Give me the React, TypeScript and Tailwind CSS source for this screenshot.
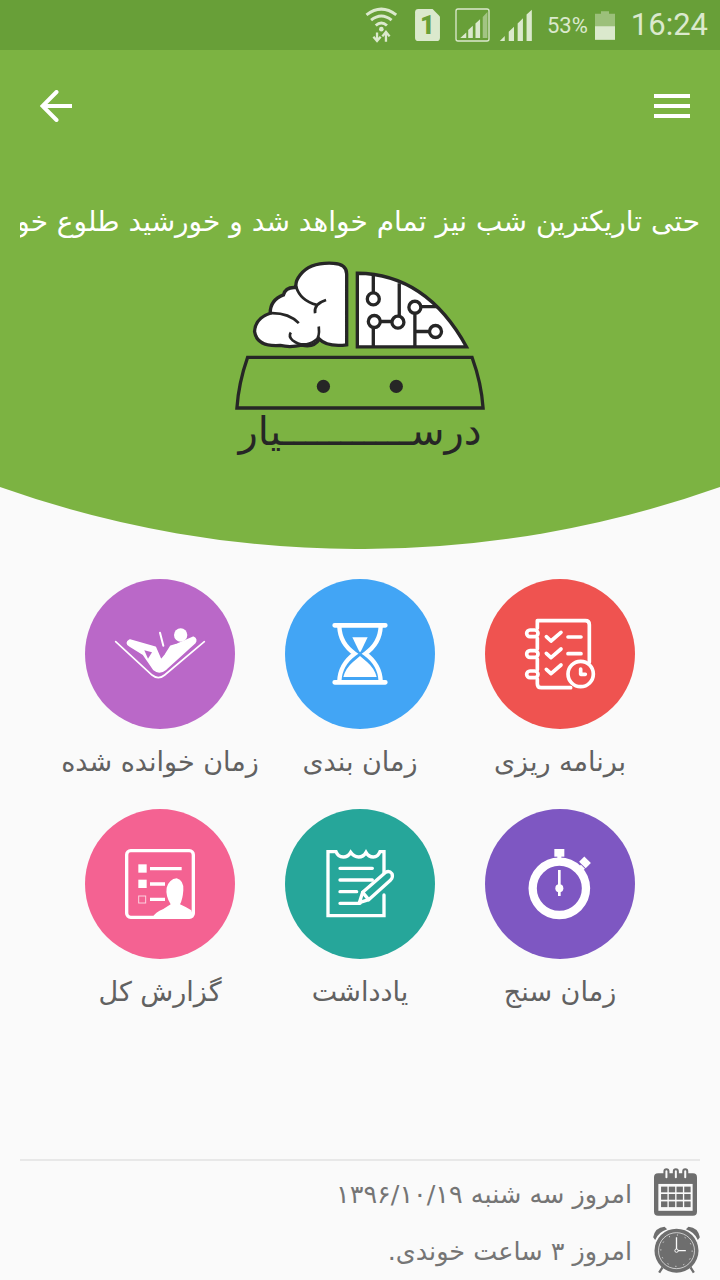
import React from 'react';

const fa = "font-['DejaVu_Sans',sans-serif]";

const WifiIcon = () => (
  <svg viewBox="75 20 105 115" className="w-[35px] h-[38px]" fill="none" stroke="#dbe9cd" strokeWidth="9">
    <path d="M82 47Q127 12 172 47" />
    <path d="M96 63Q127 38 158 63" />
    <path d="M110 79Q127 64 144 79" />
    <circle cx="127" cy="90" r="7" fill="#dbe9cd" stroke="none" />
    <path d="M114 100V125M103 113L114 126L125 113" strokeWidth="7" />
    <path d="M141 128V100M130 112L141 98L152 112" strokeWidth="7" />
  </svg>
);

const SimIcon = () => (
  <svg viewBox="228 30 74 95" className="w-[25px] h-[32px]">
    <path d="M238 30H280L302 52V115Q302 125 292 125H238Q228 125 228 115V40Q228 30 238 30Z" fill="#dbe9cd" />
    <text x="265" y="103" textAnchor="middle" fontFamily="Roboto, sans-serif" fontWeight="900" fontSize="76" fill="#689f38">1</text>
  </svg>
);

const LteIcon = () => (
  <svg viewBox="346 26 106 103" className="w-[35px] h-[34px]">
    <rect x="349" y="29" width="100" height="97" rx="6" fill="none" stroke="#dbe9cd" strokeWidth="4" />
    <path d="M362 117L380 100V117Z" fill="#dbe9cd" />
    <path d="M386 117V93L400 80V117Z" fill="#dbe9cd" />
    <path d="M408 117V73L422 60V117Z" fill="#dbe9cd" />
    <path d="M430 117V53L444 38V117Z" fill="#dbe9cd" opacity="0.5" />
  </svg>
);

const SignalIcon = () => (
  <svg viewBox="478 28 102 100" className="w-[34px] h-[33px]" fill="#dbe9cd">
    <path d="M480 125L495 110V125Z" />
    <path d="M507 125V97L523 82V125Z" />
    <path d="M534 125V72L550 56V125Z" />
    <path d="M561 125V45L577 30V125Z" />
  </svg>
);

const BatteryIcon = () => (
  <svg viewBox="765 30 60 86" className="w-[20px] h-[29px]" fill="#dbe9cd">
    <path d="M783 30H807V38H825V75H765V38H783Z" opacity="0.45" />
    <rect x="765" y="75" width="60" height="41" />
  </svg>
);

const PlannerIcon = () => (
  <svg viewBox="15 12 450 450" className="w-[150px] h-[150px]" fill="none" stroke="#fff" strokeWidth="11" strokeLinecap="round" strokeLinejoin="round">
    <path d="M172 160V137H316Q328 137 328 149V262M172 190V222M172 252V284M172 312V326Q172 338 184 338H272" />
    <rect x="140" y="165" width="34" height="20" rx="10" />
    <rect x="140" y="227" width="34" height="20" rx="10" />
    <rect x="140" y="288" width="34" height="20" rx="10" />
    <path d="M199 185L213 198L243 172M199 235L213 248L243 222M199 283L213 296L243 270" />
    <path d="M264 186H303M264 236H303" />
    <circle cx="302" cy="297" r="38" />
    <path d="M302 282V298H316" />
  </svg>
);

const HourglassIcon = () => (
  <svg viewBox="15 12 450 450" className="w-[150px] h-[150px]" fill="none" stroke="#fff" strokeLinecap="round">
    <path d="M164 151H316M164 322H316" strokeWidth="14" />
    <path d="M178 155Q180 205 224 236Q180 268 178 318M302 155Q300 205 256 236Q300 268 302 318" strokeWidth="13" />
    <path d="M217 187H263L242 230H238Z" fill="#fff" stroke="none" />
    <path d="M240 243L262 262Q283 280 290 306H190Q197 280 218 262Z" fill="#fff" stroke="none" />
  </svg>
);

const ReadingIcon = () => (
  <svg viewBox="15 12 450 450" className="w-[150px] h-[150px]" fill="none" stroke="#fff">
    <path d="M107 200L216 300Q235 316 254 300L373 200" strokeWidth="5" strokeLinecap="round" />
    <circle cx="302" cy="180" r="20" fill="#fff" stroke="none" />
    <path d="M150 195L226 217L243 256L256 240L272 214L292 208L340 187Q352 192 344 204L258 282Q238 298 222 284L190 238L150 213Q134 204 150 195Z" fill="#fff" stroke="#fff" strokeWidth="5" strokeLinejoin="round" />
    <path d="M193 226L216 232L204 251Z" fill="#ba68c8" stroke="none" />
    <path d="M240 173L250 212" strokeWidth="6" strokeLinecap="round" />
  </svg>
);

const StopwatchIcon = () => (
  <svg viewBox="15 12 450 450" className="w-[150px] h-[150px]" fill="#fff">
    <rect x="223" y="132" width="30" height="23" />
    <rect x="232" y="150" width="12" height="20" />
    <rect x="301" y="161" width="28" height="22" transform="rotate(45 315 172)" />
    <path d="M300 182L312 194" stroke="#fff" strokeWidth="8" />
    <circle cx="238" cy="250" r="80" fill="none" stroke="#fff" strokeWidth="25" />
    <rect x="234" y="195" width="8" height="78" />
    <circle cx="238" cy="250" r="12" />
  </svg>
);

const NoteIcon = () => (
  <svg viewBox="15 12 450 450" className="w-[150px] h-[150px]" fill="none" stroke="#fff" strokeWidth="10" strokeLinecap="round">
    <path d="M312 215V140H300Q294 156 280 156Q266 156 258 142Q250 156 236 156Q222 156 212 142Q204 156 190 156Q174 156 168 140H144V332H312V270" strokeLinejoin="miter" />
    <path d="M180 190H277M180 225H277M180 260H230M180 295H240" />
    <path d="M238 293L248 262L317 202Q328 196 336 206Q340 216 332 225L266 284Z" fill="#26a69a" strokeLinejoin="round" />
    <path d="M248 262L266 284" />
  </svg>
);

const ReportIcon = () => (
  <svg viewBox="15 12 450 450" className="w-[150px] h-[150px]" fill="none" stroke="#fff">
    <rect x="140" y="137" width="200" height="200" rx="12" strokeWidth="10" />
    <rect x="175" y="178" width="25" height="25" fill="#fff" stroke="none" />
    <rect x="175" y="224" width="25" height="25" fill="#fff" stroke="none" />
    <rect x="176" y="273" width="21" height="21" strokeWidth="3" opacity="0.7" />
    <path d="M210 191H305M210 237H255M210 283H255" strokeWidth="10" />
    <path d="M218 337Q225 322 250 312L272 298Q256 272 260 248Q268 222 290 220Q312 226 310 256Q308 284 300 298Q318 306 334 316L340 337Z" fill="#fff" stroke="none" />
  </svg>
);

const CalendarIcon = () => (
  <svg viewBox="1005 55 128 142" className="w-[43px] h-[48px] mr-[3px] mb-[4px]">
    <rect x="1005" y="70" width="128" height="127" rx="12" fill="#6e6e6e" />
    <rect x="1018" y="102" width="102" height="80" fill="#fafafa" />
    <g fill="none" stroke="#6e6e6e" strokeWidth="6">
      <rect x="1036" y="58" width="12" height="30" rx="6" fill="#fafafa" />
      <rect x="1064" y="58" width="12" height="30" rx="6" fill="#fafafa" />
      <rect x="1092" y="58" width="12" height="30" rx="6" fill="#fafafa" />
    </g>
    <g fill="#6e6e6e">
      <rect x="1026" y="110" width="19" height="17" />
      <rect x="1049" y="110" width="19" height="17" />
      <rect x="1072" y="110" width="19" height="17" />
      <rect x="1095" y="110" width="19" height="17" />
      <rect x="1026" y="132" width="19" height="17" />
      <rect x="1049" y="132" width="19" height="17" />
      <rect x="1072" y="132" width="19" height="17" />
      <rect x="1095" y="132" width="19" height="17" />
      <rect x="1026" y="154" width="19" height="17" />
      <rect x="1049" y="154" width="19" height="17" />
      <rect x="1072" y="154" width="19" height="17" />
      <rect x="1095" y="154" width="19" height="17" />
    </g>
  </svg>
);

const AlarmIcon = () => (
  <svg viewBox="1000 228 140 144" className="w-[47px] h-[48px] mb-[4px]">
    <path d="M1000 262Q1005 232 1034 230L1042 238Q1016 246 1006 270Z" fill="#6e6e6e" />
    <path d="M1140 262Q1135 232 1106 230L1098 238Q1124 246 1134 270Z" fill="#6e6e6e" />
    <path d="M1028 352L1018 368M1112 352L1122 368" stroke="#6e6e6e" strokeWidth="7" />
    <circle cx="1070" cy="302" r="66" fill="#6e6e6e" />
    <circle cx="1070" cy="302" r="54" fill="none" stroke="#fafafa" strokeWidth="2" />
    <circle cx="1070" cy="302" r="47" fill="none" stroke="#fafafa" strokeWidth="3" strokeDasharray="3 21.6" />
    <path d="M1070 302V262M1070 302H1098" stroke="#fafafa" strokeWidth="4" />
    <circle cx="1070" cy="302" r="5" fill="#6e6e6e" stroke="#fafafa" strokeWidth="3" />
  </svg>
);

const LogoDrawing = () => (
  <svg viewBox="0 0 840 490" className="w-[280px] h-[163px]" fill="none" stroke="#262626" strokeWidth="10">
    <path d="M380 72Q380 42 340 40Q270 36 240 75Q224 95 228 113Q196 110 190 135Q150 150 150 190Q105 205 103 245Q110 292 180 287Q210 294 245 286Q282 294 298 268Q320 292 380 285Z" fill="#fff" />
    <path d="M228 110Q240 152 290 165M318 150Q280 162 285 190M150 190Q205 188 236 220M296 230Q300 266 285 272Q250 296 218 272Q204 260 212 248" strokeWidth="8" />
    <path d="M412 70Q620 72 740 291H412Z" fill="#fff" />
    <path d="M460 70V128M538 100V198M460 236V290M482 215H515M605 170H652M585 192V290M585 245H628" />
    <circle cx="460" cy="147" r="18" />
    <circle cx="463" cy="215" r="18" />
    <circle cx="534" cy="217" r="18" />
    <circle cx="585" cy="172" r="18" />
    <circle cx="647" cy="245" r="18" />
    <path d="M82 323H757Q785 400 790 475H50Q55 400 82 323Z" />
    <circle cx="310" cy="410" r="20" fill="#262626" stroke="none" />
    <circle cx="529" cy="410" r="20" fill="#262626" stroke="none" />
  </svg>
);

const items = [
  { label: 'برنامه ریزی', bg: 'bg-[#ef5350]', Icon: PlannerIcon },
  { label: 'زمان بندی', bg: 'bg-[#42a5f5]', Icon: HourglassIcon },
  { label: 'زمان خوانده شده', bg: 'bg-[#ba68c8]', Icon: ReadingIcon },
  { label: 'زمان سنج', bg: 'bg-[#7e57c2]', Icon: StopwatchIcon },
  { label: 'یادداشت', bg: 'bg-[#26a69a]', Icon: NoteIcon },
  { label: 'گزارش کل', bg: 'bg-[#f46292]', Icon: ReportIcon },
];

export default function App() {
  return (
    <div className={`w-[720px] h-[1280px] overflow-hidden flex flex-col bg-[#fafafa] ${fa}`}>
      <div className="h-[50px] shrink-0 bg-[#689f38] flex items-center justify-end pr-[12px] text-[#dbe9cd] font-['Roboto',sans-serif]">
        <WifiIcon />
        <div className="ml-[16px]"><SimIcon /></div>
        <div className="ml-[15px]"><LteIcon /></div>
        <div className="ml-[9px]"><SignalIcon /></div>
        <span className="ml-[14px] text-[22px]">53%</span>
        <div className="ml-[7px]"><BatteryIcon /></div>
        <span className="ml-[16px] text-[31px]">16:24</span>
      </div>

      <div className="h-[437px] shrink-0 bg-[#7cb342] flex flex-col">
        <div className="h-[112px] shrink-0 flex items-center justify-between pl-[40px] pr-[30px]">
          <svg viewBox="0 0 33 32" className="w-[33px] h-[32px]" fill="none" stroke="#fff" strokeWidth="4" strokeLinecap="round">
            <path d="M32 16H4" strokeLinecap="butt" />
            <path d="M16.5 2L2.5 16L16.5 30" />
          </svg>
          <div className="flex flex-col gap-[6px]">
            <div className="w-[36px] h-[4px] bg-white" />
            <div className="w-[36px] h-[4px] bg-white" />
            <div className="w-[36px] h-[4px] bg-white" />
          </div>
        </div>
        <div dir="rtl" className="mx-[20px] mt-[42px] overflow-hidden whitespace-nowrap text-white text-[28px] leading-[36px]">
          حتی تاریکترین شب نیز تمام خواهد شد و خورشید طلوع خواهد کرد
        </div>
        <div className="mt-[10px] flex flex-col items-center">
          <LogoDrawing />
          <div dir="rtl" className="h-[44px] text-center text-[#262626] text-[40px] leading-[36px] whitespace-nowrap">
            درســـــــــــیار
          </div>
        </div>
      </div>
      <svg viewBox="0 0 720 62" className="w-[720px] h-[62px] shrink-0">
        <path d="M0 0H720A1076 1076 0 0 1 0 0Z" fill="#7cb342" />
      </svg>

      <div dir="rtl" className="mt-[30px] px-[60px] grid grid-cols-3 gap-y-[20px]">
        {items.map(({ label, bg, Icon }) => (
          <div key={label} className="flex flex-col items-center">
            <div className={`w-[150px] h-[150px] rounded-full ${bg}`}><Icon /></div>
            <div className="mt-[14px] h-[46px] leading-[37px] text-[27px] text-[#616161] whitespace-nowrap">{label}</div>
          </div>
        ))}
      </div>

      <div className="mx-[20px] mt-[140px] border-t-2 border-[#e8e8e8]">
        <div dir="rtl" className="flex items-center h-[62px] pt-[4px] text-[#757575] text-[25.5px]">
          <CalendarIcon />
          <span className="mr-[22px]">امروز سه شنبه ۱۳۹۶/۱۰/۱۹</span>
        </div>
        <div dir="rtl" className="flex items-center h-[57px] text-[#757575] text-[25.5px]">
          <AlarmIcon />
          <span className="mr-[21px]">امروز ۳ ساعت خوندی.</span>
        </div>
      </div>
    </div>
  );
}
